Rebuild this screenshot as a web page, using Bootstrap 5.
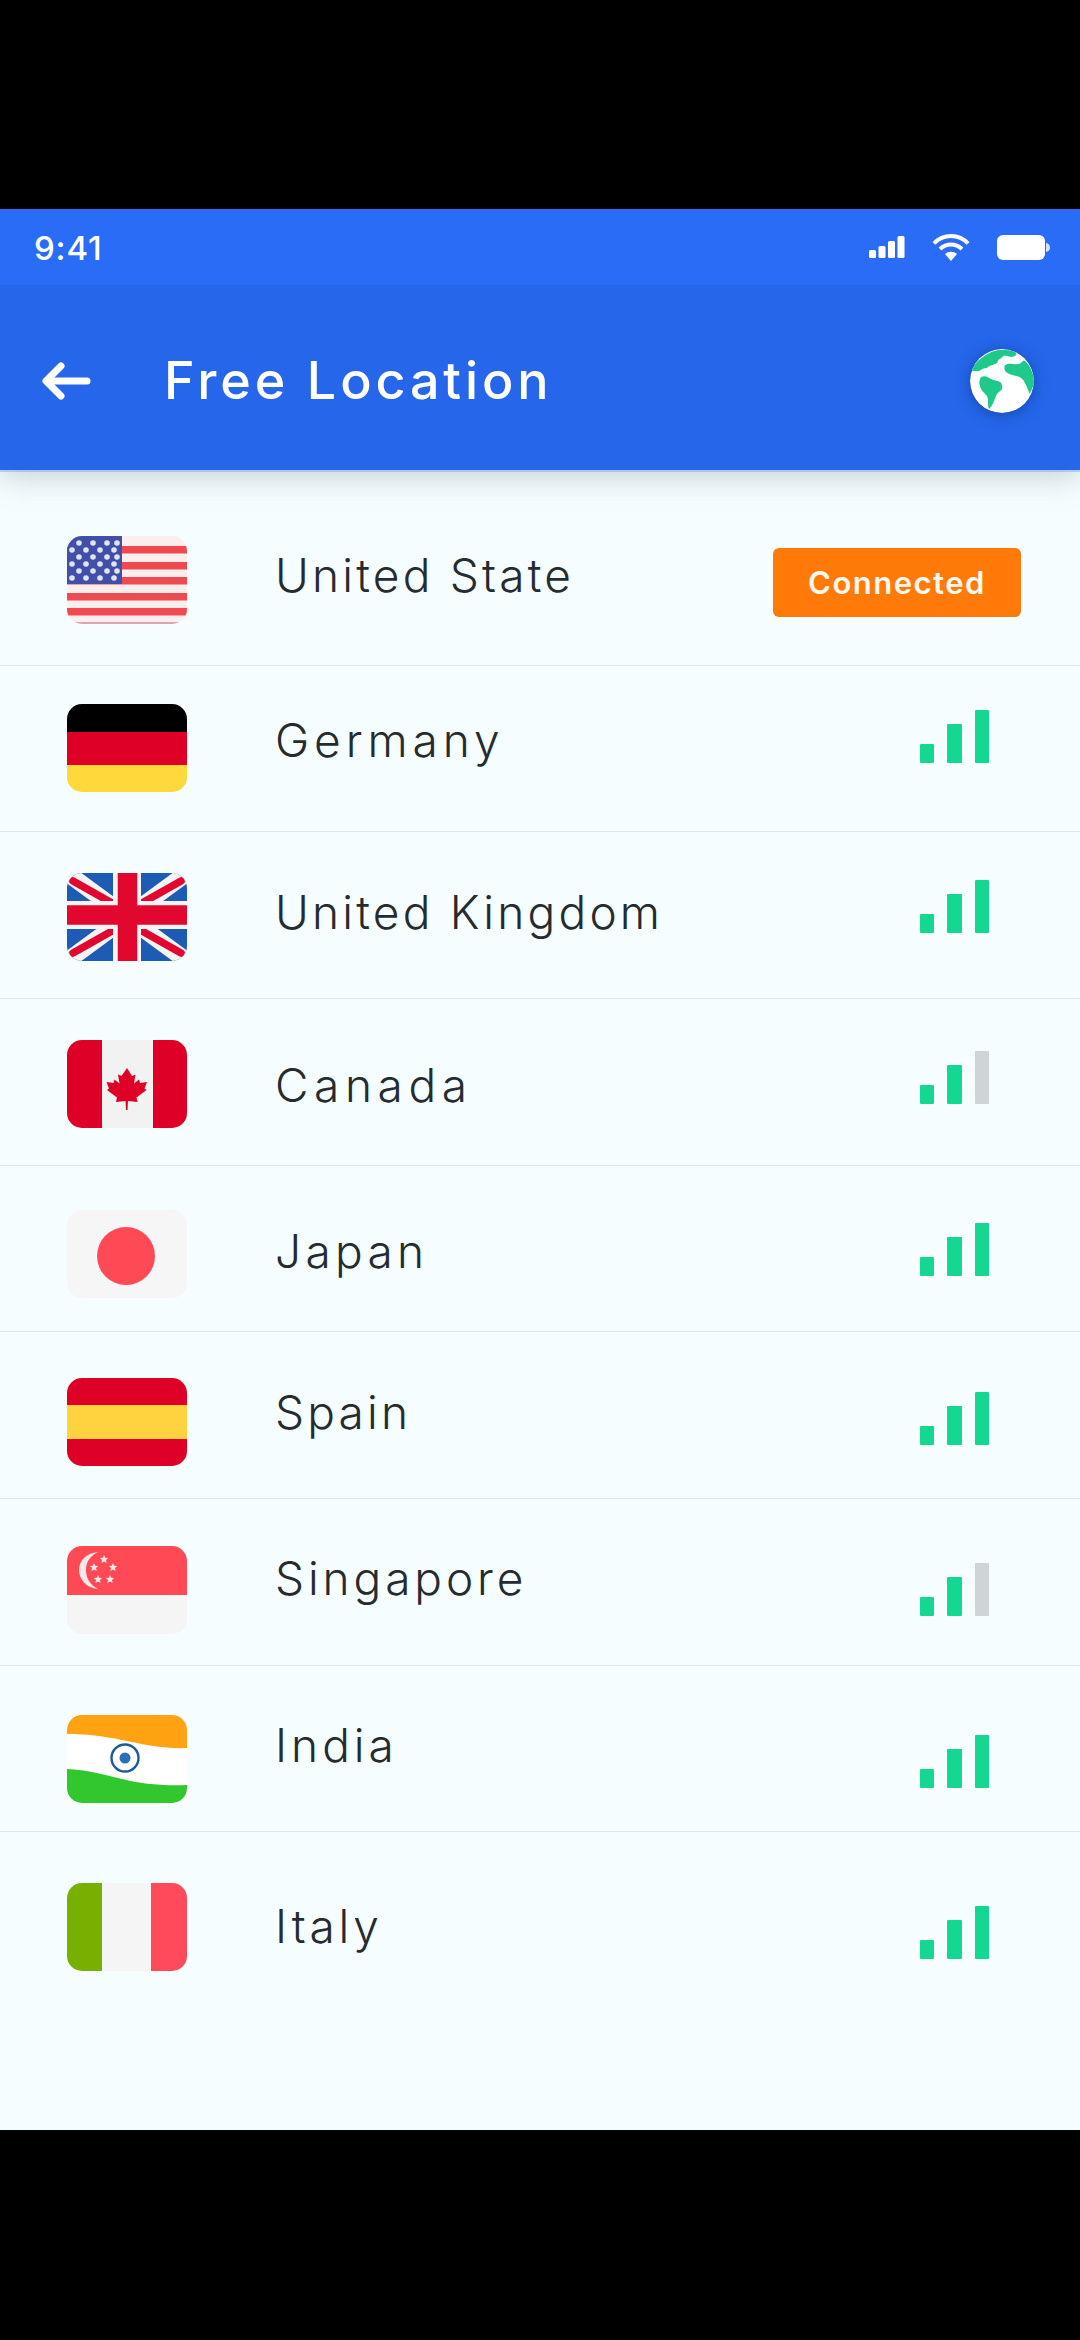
<!doctype html>
<html lang="en">
<head>
<meta charset="utf-8">
<title>Free Location</title>
<link rel="stylesheet" href="https://cdn.jsdelivr.net/npm/bootstrap@5.3.0/dist/css/bootstrap.min.css">
<style>
html,body{height:2340px;overflow:hidden}
body{background:#000;font-family:Inter,"Liberation Sans",sans-serif;padding-top:209px}
.screen{height:1921px;background:#f6fdff;overflow:hidden}
.head-bar{position:relative;z-index:2;background:#2566ea;box-shadow:0 2px 0 rgba(120,150,230,.4),0 6px 30px rgba(100,130,130,.36)}
.stat-bar{height:76px;background:#2a6cf5;padding:0 30px 0 34px;color:#fff}
.stat-time{font-size:33px;font-weight:500;line-height:1;letter-spacing:.8px;margin-top:2px}
.stat-icons{gap:27px}
.tool-bar{height:185px;padding:7px 46px 0 41px;flex-wrap:nowrap}
.tool-title{font-size:52px;font-weight:500;color:#fff;letter-spacing:3.9px;margin:0 0 0 73px;line-height:60px;padding:0}
.globe{border-radius:50%;box-shadow:0 2px 14px rgba(15,50,130,.55)}
.loc-list{border-radius:0}
.loc-item{display:flex;align-items:flex-start;background:transparent;border-color:#dfe6e8;border-width:0 0 2px;padding:0 91px 0 67px;margin:0}
.loc-item:last-child{border-bottom:0}
.loc-flag{flex:none;display:block;width:120px;height:88px;border-radius:15px;margin-top:var(--flag)}
.loc-name{flex:none;margin:var(--name) 0 0 88px;font-size:46px;font-weight:350;line-height:60px;letter-spacing:var(--track,3.2px);color:#252b2e}
.sig{display:flex;align-items:flex-end;gap:13px;height:53px;margin:var(--sig) 0 0 auto}
.sig-bar{display:block;width:14px;background:#14d792;border-radius:1px}
.sig-bar.low{height:19px}
.sig-bar.mid{height:39px;width:15px}
.sig-bar.top{height:53px}
.sig-bar.off{background:#cfd4d6}
.conn-tag{margin:78px -32px 0 auto;width:248px;height:69px;display:flex;align-items:center;justify-content:center;background:#ff7a09;color:#fff8ee;font-size:31px;font-weight:600;border-radius:6px;padding:0;letter-spacing:1.5px}
.i1{height:196px;--flag:66px;--name:75px}
.i2{height:166px;--flag:38px;--name:44px;--sig:44px;--track:4.9px}
.i3{height:167px;--flag:41px;--name:50px;--sig:48px}
.i4{height:167px;--flag:41px;--name:56px;--sig:52px;--track:5.6px}
.i5{height:166px;--flag:44px;--name:55px;--sig:57px;--track:4.3px}
.i6{height:167px;--flag:46px;--name:50px;--sig:60px}
.i7{height:167px;--flag:47px;--name:49px;--sig:64px;--track:3.9px}
.i8{height:166px;--flag:49px;--name:49px;--sig:69px;--track:4px}
.i9{height:166px;--flag:51px;--name:64px;--sig:74px;--track:3.8px}
</style>
</head>
<body>
<main class="screen d-flex flex-column">
  <header class="head-bar">
    <div class="stat-bar d-flex align-items-center justify-content-between">
      <span class="stat-time">9:41</span>
      <span class="d-flex align-items-center stat-icons">
        <svg width="36" height="24" viewBox="0 0 36 24" fill="#fff"><rect x="0" y="15" width="7" height="8" rx="1.500"/><rect x="9.500" y="11" width="7" height="12" rx="1.500"/><rect x="19" y="6" width="7" height="17" rx="1.500"/><rect x="28.500" y="1" width="7" height="22" rx="1.500"/></svg>
        <svg width="38" height="27" viewBox="0 0 38 27" fill="none" stroke="#fff" stroke-width="4"><path d="M2 9.500C11-.5 27-.5 36 9.500"/><path d="M8 15c6.500-6 15.500-6 22 0"/><path d="M19 27l-6-7c3.500-3 8.500-3 12 0z" fill="#fff" stroke="none"/></svg>
        <svg width="53" height="25" viewBox="0 0 53 25" fill="#fff"><rect x="0" y="0" width="48" height="25" rx="6"/><path d="M49 8c2.500.5 4 2.200 4 4.500s-1.500 4-4 4.500z" opacity=".8"/></svg>
      </span>
    </div>
    <nav class="navbar tool-bar">
      <svg width="50" height="38" viewBox="0 0 50 38" fill="none" stroke="#fff" stroke-width="7" stroke-linecap="round" stroke-linejoin="round"><path d="M46 19H6"/><path d="M20 4 5 19l15 15"/></svg>
      <h1 class="navbar-brand tool-title me-auto">Free Location</h1>
      <svg class="globe" width="64" height="64" viewBox="0 0 64 64"><circle cx="32" cy="32" r="32" fill="#fff"/><path d="M13 8C20 2 33-2 45 3c3 2 1 4-3 5-3 0-5-2-9-1-1 3-4 2-5 5-2 5-8 3-11 7-3 0-5 1-8 3-2 0-4 0-7 0C3 17 7 12 13 8z" fill="#1fc98a"/><path d="M35 16c5-3 8 0 13-1 5-1 5-5 7-3 6 5 9 14 9 22-1 5-3 7-4 11-2-3-3-8-5-11-2-4-4-6-8-7-4-1-7-1-11-4-2-2-2-5-1-7z" fill="#1fc98a"/><path d="M11 28c4-2 7 0 10 2 3 2 8 1 10 4 2 4 2 6-2 9-3 2-3 5-5 9-2 5-4 7-5 8-2-3 0-9-2-13-3-4-6-5-7-10-1-3-1-6 1-9z" fill="#1fc98a"/></svg>
    </nav>
  </header>

  <ul class="list-group list-group-flush loc-list">
    <li class="list-group-item loc-item i1">
      <svg class="loc-flag" viewBox="0 0 120 88"><rect width="120" height="88" fill="#fdeeee"/><g fill="#ef4a52"><rect y="10" width="120" height="7.500"/><rect y="26" width="120" height="7.500"/><rect y="41" width="120" height="7.500"/><rect y="57" width="120" height="7.500"/><rect y="72" width="120" height="7.500"/></g><rect y="86" width="120" height="2" fill="#d9a7b4"/><rect width="55" height="48" fill="#414fa6"/><g fill="#dfe3f6"><circle cx="12" cy="7" r="2.800"/><circle cx="26" cy="7" r="2.800"/><circle cx="40" cy="7" r="2.800"/><circle cx="50" cy="7" r="2.800"/><circle cx="5" cy="14" r="2.800"/><circle cx="19" cy="14" r="2.800"/><circle cx="33" cy="14" r="2.800"/><circle cx="47" cy="14" r="2.800"/><circle cx="12" cy="21" r="2.800"/><circle cx="26" cy="21" r="2.800"/><circle cx="40" cy="21" r="2.800"/><circle cx="50" cy="21" r="2.800"/><circle cx="5" cy="28" r="2.800"/><circle cx="19" cy="28" r="2.800"/><circle cx="33" cy="28" r="2.800"/><circle cx="47" cy="28" r="2.800"/><circle cx="12" cy="35" r="2.800"/><circle cx="26" cy="35" r="2.800"/><circle cx="40" cy="35" r="2.800"/><circle cx="50" cy="35" r="2.800"/><circle cx="5" cy="42" r="2.800"/><circle cx="19" cy="42" r="2.800"/><circle cx="33" cy="42" r="2.800"/><circle cx="47" cy="42" r="2.800"/></g></svg>
      <span class="loc-name">United State</span>
      <span class="badge conn-tag">Connected</span>
    </li>
    <li class="list-group-item loc-item i2">
      <svg class="loc-flag" viewBox="0 0 120 88"><rect width="120" height="28" fill="#000"/><rect y="28" width="120" height="33" fill="#de0027"/><rect y="61" width="120" height="27" fill="#ffd83b"/></svg>
      <span class="loc-name">Germany</span>
      <span class="sig"><i class="sig-bar low"></i><i class="sig-bar mid"></i><i class="sig-bar top"></i></span>
    </li>
    <li class="list-group-item loc-item i3">
      <svg class="loc-flag" viewBox="0 0 120 88"><rect width="120" height="88" fill="#1c5cb4"/><path d="M0 0 120 88M120 0 0 88" stroke="#f4f4f4" stroke-width="17"/><path d="M6 8 45 30M114 8 75 30M6 80 45 58M114 80 75 58" stroke="#e2072e" stroke-width="7.500" stroke-linecap="round"/><path d="M60 0V88M0 42H120" stroke="#f4f4f4" stroke-width="28"/><path d="M60.500 0V88M0 42H120" stroke="#e2072e" stroke-width="19.500"/></svg>
      <span class="loc-name">United Kingdom</span>
      <span class="sig"><i class="sig-bar low"></i><i class="sig-bar mid"></i><i class="sig-bar top"></i></span>
    </li>
    <li class="list-group-item loc-item i4">
      <svg class="loc-flag" viewBox="0 0 120 88"><rect width="120" height="88" fill="#f2f2f2"/><rect width="35" height="88" fill="#de0027"/><rect x="86" width="34" height="88" fill="#de0027"/><path d="M60 28l5 8 3.500-1.500-1.500 9 5-4 1 3.500 7-1-2.500 6.500 2 1.500-10 7.500 1 4.500-9.500-1-.5 9h-1.500l-.5-9-9.500 1 1-4.500-10-7.500 2-1.500-2.500-6.500 7 1 1-3.500 5 4-1.500-9 3.500 1.500z" fill="#de0027"/></svg>
      <span class="loc-name">Canada</span>
      <span class="sig"><i class="sig-bar low"></i><i class="sig-bar mid"></i><i class="sig-bar top off"></i></span>
    </li>
    <li class="list-group-item loc-item i5">
      <svg class="loc-flag" viewBox="0 0 120 88"><rect width="120" height="88" fill="#f6f6f7"/><circle cx="59" cy="46" r="29" fill="#ff4a55"/></svg>
      <span class="loc-name">Japan</span>
      <span class="sig"><i class="sig-bar low"></i><i class="sig-bar mid"></i><i class="sig-bar top"></i></span>
    </li>
    <li class="list-group-item loc-item i6">
      <svg class="loc-flag" viewBox="0 0 120 88"><rect width="120" height="88" fill="#de0027"/><rect y="27" width="120" height="34" fill="#ffd23f"/></svg>
      <span class="loc-name">Spain</span>
      <span class="sig"><i class="sig-bar low"></i><i class="sig-bar mid"></i><i class="sig-bar top"></i></span>
    </li>
    <li class="list-group-item loc-item i7">
      <svg class="loc-flag" viewBox="0 0 120 88"><rect width="120" height="88" fill="#f5f5f5"/><rect width="120" height="49" fill="#ff4a55"/><path d="M31 6C19 7 12 15 12 24s7 18 19 19C23 39 19 32 19 24S23 10 31 6z" fill="#fbe7e8"/><g fill="#fbe7e8"><path d="M37 9l1.200 2.700 3 .3-2.200 2 .6 3-2.600-1.500-2.600 1.500.6-3-2.200-2 3-.3z"/><path d="M27 17l1.200 2.700 3 .3-2.200 2 .6 3-2.600-1.500-2.600 1.500.6-3-2.200-2 3-.3z"/><path d="M46 17l1.200 2.700 3 .3-2.200 2 .6 3-2.600-1.500-2.600 1.500.6-3-2.200-2 3-.3z"/><path d="M31 29l1.200 2.700 3 .3-2.200 2 .6 3-2.600-1.500-2.600 1.500.6-3-2.200-2 3-.3z"/><path d="M43 29l1.200 2.700 3 .3-2.200 2 .6 3-2.600-1.500-2.600 1.500.6-3-2.200-2 3-.3z"/></g></svg>
      <span class="loc-name">Singapore</span>
      <span class="sig"><i class="sig-bar low"></i><i class="sig-bar mid"></i><i class="sig-bar top off"></i></span>
    </li>
    <li class="list-group-item loc-item i8">
      <svg class="loc-flag" viewBox="0 0 120 88"><rect width="120" height="88" fill="#fff"/><path d="M0 0H120V33C95 34 75 29 55 25 35 21 20 19 0 19z" fill="#ffa313"/><path d="M0 54C20 55 35 59 55 64 75 69 95 71 120 70V88H0z" fill="#32c62f"/><circle cx="58" cy="43" r="13.500" fill="#fff" stroke="#1d5c9c" stroke-width="2.400"/><circle cx="58" cy="43" r="5.500" fill="#2a6fb8"/></svg>
      <span class="loc-name">India</span>
      <span class="sig"><i class="sig-bar low"></i><i class="sig-bar mid"></i><i class="sig-bar top"></i></span>
    </li>
    <li class="list-group-item loc-item i9">
      <svg class="loc-flag" viewBox="0 0 120 88"><rect width="120" height="88" fill="#f6f5f5"/><rect width="35" height="88" fill="#78b000"/><rect x="84" width="36" height="88" fill="#ff4a5c"/></svg>
      <span class="loc-name">Italy</span>
      <span class="sig"><i class="sig-bar low"></i><i class="sig-bar mid"></i><i class="sig-bar top"></i></span>
    </li>
  </ul>
</main>
<script src="https://cdn.jsdelivr.net/npm/bootstrap@5.3.0/dist/js/bootstrap.bundle.min.js"></script>
</body>
</html>
